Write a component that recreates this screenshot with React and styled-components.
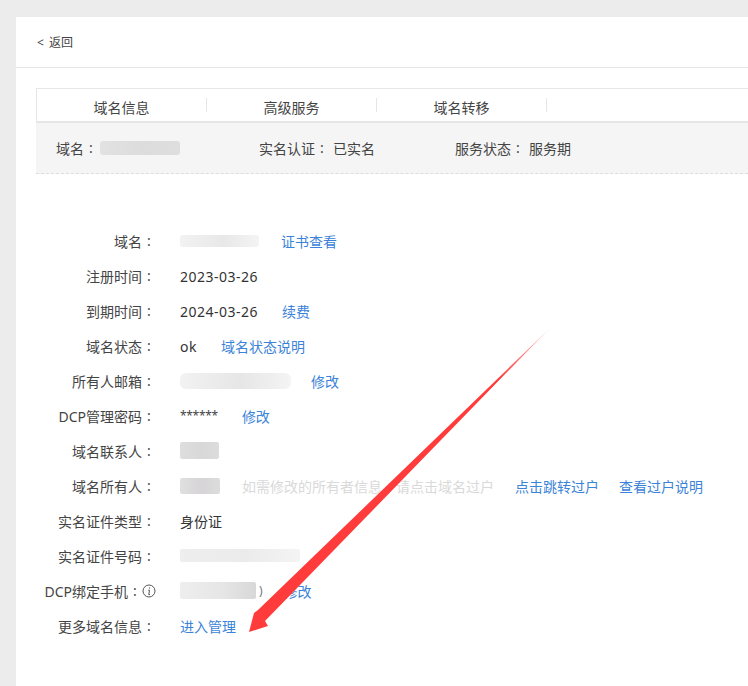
import React from "react";
import styled, { createGlobalStyle } from "styled-components";

const Global = createGlobalStyle`
  html, body { margin: 0; padding: 0; background: #ececec; }
  body { font-family: "Noto Sans", "Noto Sans CJK SC", sans-serif; font-size: 14px; color: #333; }
  #root { width: 748px; height: 686px; overflow: hidden; }
`;
const Page = styled.div`
  position: relative; width: 748px; height: 686px; overflow: hidden;
  padding: 17px 0 0 16px; box-sizing: border-box;
`;
const Card = styled.main`
  background: #fff; width: 732px; height: 669px; display: flex; flex-direction: column;
`;
const TopBar = styled.header`
  height: 51px; box-sizing: border-box; border-bottom: 1px solid #e6e6e6;
  display: flex; align-items: center; padding: 0 0 0 21px; gap: 5px;
  font-size: 12px; color: #444;
`;
const Section = styled.section`
  margin: 20px 0 0 20px;
`;
const Tabs = styled.nav`
  height: 35px; box-sizing: border-box; border: 1px solid #e6e6e6; border-right: 0;
  border-bottom-width: 2px; display: flex; align-items: center;
`;
const Tab = styled.div`
  width: 170px; height: 14px; box-sizing: border-box; padding-top: 3px;
  display: flex; align-items: center; justify-content: center;
  border-right: 1px solid #e6e6e6; color: #444; font-size: 14px;
`;
const Summary = styled.div`
  height: 51px; box-sizing: border-box; background: #f5f5f5; border-bottom: 1px dashed #ddd;
  display: flex; align-items: center; padding: 0 0 1px 20px; color: #444;
`;
const SummaryItem = styled.div`
  display: flex; align-items: center; width: ${p => p.$w}px; white-space: pre;
`;
const Colon = styled.span`
  width: 14px; text-align: center; flex: none; margin-right: ${p => p.$mr || 0}px;
`;
const Mask = styled.span`
  display: inline-block; width: ${p => p.$w}px; height: ${p => p.$h || 14}px;
  background: linear-gradient(90deg, ${p => p.$from || "#ededed"} 0%, ${p => p.$mid || "#e6e6e6"} 55%, ${p => p.$to || "#f4f4f4"} 100%);
  border-radius: ${p => p.$r || 3}px;
  flex: none;
`;
const Rows = styled.div`
  margin-top: 49px; display: flex; flex-direction: column;
`;
const Row = styled.div`
  height: 35px; display: flex; align-items: center; white-space: nowrap;
`;
const Label = styled.div`
  width: 140px; flex: none; display: flex; justify-content: flex-end;
  align-items: center; color: #444;
`;
const Value = styled.span`
  color: #333; padding-top: 1px; letter-spacing: ${p => (p.$plain ? 0 : 0.5)}px; margin-right: ${p => p.$mr || 0}px;
`;
const Stars = styled.span`
  color: #444; font-size: 12px; letter-spacing: -0.3px; margin-right: 24px;
`;
const Peek = styled.span`
  color: #777; margin-left: 3px; font-size: 12px;
`;
const LinkA = styled.a`
  color: #3b83d8; margin-left: ${p => p.$ml || 0}px; cursor: pointer;
`;
const Note = styled.span`
  color: #d9d9d9; margin-left: ${p => p.$ml || 0}px;
`;
const ValueCell = styled.div`
  display: flex; align-items: center; padding-left: 24px;
`;
const Arrow = styled.svg`
  position: absolute; left: 0; top: 0; pointer-events: none;
`;
const InfoIcon = styled.svg`
  flex: none;
`;

const Info = () => (
  <InfoIcon width="14" height="14" viewBox="0 0 14 14">
    <circle cx="7" cy="7" r="6" fill="none" stroke="#555" strokeWidth="1" />
    <path d="M7.6 3.4v1.2M6.2 6.2h1.3L6.8 10.6h1.2" fill="none" stroke="#555" strokeWidth="1" />
  </InfoIcon>
);

const Field = ({ label, info, children }) => (
  <Row>
    <Label>{label}<Colon>:</Colon>{info && <Info />}</Label>
    <ValueCell>{children}</ValueCell>
  </Row>
);

export default function App() {
  return (
    <Page>
      <Global />
      <Card>
        <TopBar><span>&lt;</span><span>返回</span></TopBar>
        <Section>
          <Tabs>
            <Tab>域名信息</Tab><Tab>高级服务</Tab><Tab>域名转移</Tab>
          </Tabs>
          <Summary>
            <SummaryItem $w={203}>域名<Colon $mr={2}>:</Colon><Mask $w={80} $from="#e2e2e2" $mid="#dcdcdc" $to="#dedede" /></SummaryItem>
            <SummaryItem $w={196}>实名认证<Colon $mr={4}>:</Colon>已实名</SummaryItem>
            <SummaryItem $w={200}>服务状态<Colon $mr={4}>:</Colon>服务期</SummaryItem>
          </Summary>
        </Section>
        <Rows>
          <Field label="域名"><Mask $w={79} $h={12} $from="#f2f2f2" $mid="#e8e8e8" /><LinkA $ml={22}>证书查看</LinkA></Field>
          <Field label="注册时间"><Value>2023-03-26</Value></Field>
          <Field label="到期时间"><Value $mr={24}>2024-03-26</Value><LinkA>续费</LinkA></Field>
          <Field label="域名状态"><Value $mr={24}>ok</Value><LinkA>域名状态说明</LinkA></Field>
          <Field label="所有人邮箱"><Mask $w={111} $h={16} $from="#f2f2f2" $mid="#e6e6e6" $r={6} /><LinkA $ml={20}>修改</LinkA></Field>
          <Field label="DCP管理密码"><Stars>******</Stars><LinkA>修改</LinkA></Field>
          <Field label="域名联系人"><Mask $w={39} $h={17} $from="#dedede" $mid="#d8d8d8" $to="#dcdcdc" $r={2} /></Field>
          <Field label="域名所有人">
            <Mask $w={40} $h={16} $from="#e0e0e0" $mid="#d6d4d6" $to="#dddddd" $r={2} />
            <Note $ml={22}>如需修改的所有者信息</Note>
            <Note $ml={14}>请点击域名过户</Note>
            <LinkA $ml={21}>点击跳转过户</LinkA>
            <LinkA $ml={20}>查看过户说明</LinkA>
          </Field>
          <Field label="实名证件类型"><Value $plain>身份证</Value></Field>
          <Field label="实名证件号码"><Mask $w={120} $h={13} $from="#eeeeee" $mid="#ebebeb" $r={2} /></Field>
          <Field label="DCP绑定手机" info>
            <Mask $w={76} $h={17} $from="#eeeeee" $mid="#e6e6e6" $to="#d8d8d8" $r={2} /><Peek>)</Peek><LinkA $ml={21}>修改</LinkA>
          </Field>
          <Field label="更多域名信息"><LinkA>进入管理</LinkA></Field>
        </Rows>
      </Card>
      <Arrow width="748" height="686" viewBox="0 0 748 686">
        <defs>
          <linearGradient id="fade" x1="549" y1="329" x2="440" y2="440" gradientUnits="userSpaceOnUse">
            <stop offset="0" stopColor="#ff3b3b" stopOpacity="0.25" />
            <stop offset="0.45" stopColor="#ff3b3b" />
          </linearGradient>
        </defs>
        <polygon points="549,329 265,621 268,626 249,632 254,613 258,610" fill="url(#fade)" />
      </Arrow>
    </Page>
  );
}
